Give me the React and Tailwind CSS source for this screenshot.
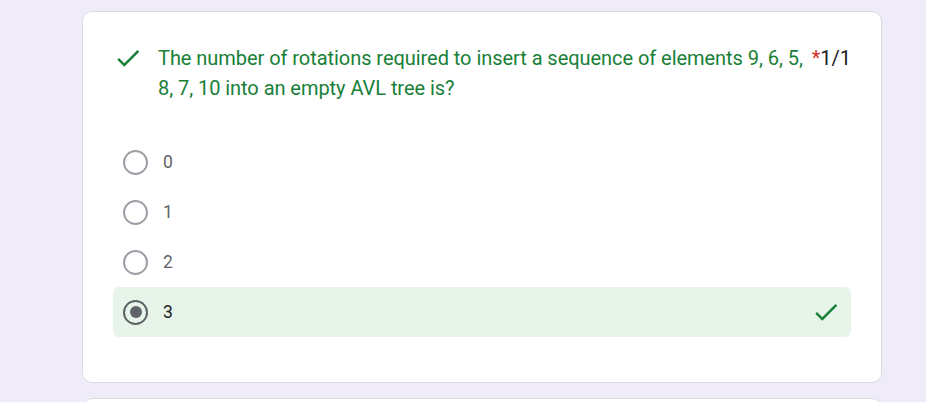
import { useState } from 'react';

const options = ['0', '1', '2', '3'];

function CheckIcon({ className }) {
    return (
        <svg viewBox="0 0 24 24" className={className} fill="currentColor">
            <path d="M9 16.17L4.83 12l-1.42 1.41L9 19 21 7l-1.41-1.41z" />
        </svg>
    );
}

function Radio({ checked }) {
    if (checked) {
        return (
            <div className="w-[25px] h-[25px] rounded-full border-[2.5px] border-[#5f6368] flex items-center justify-center shrink-0">
                <div className="w-[12px] h-[12px] rounded-full bg-[#5f6368]"></div>
            </div>
        );
    }
    return <div className="w-[25px] h-[25px] rounded-full border-[2.5px] border-[#9aa0a6] shrink-0"></div>;
}

export default function App() {
    const [selected] = useState('3');
    const correct = '3';

    return (
        <div
            className="min-h-screen bg-[#f0ebf8] pt-[11px] pl-[82px] pr-[44px]"
            style={{ fontFamily: 'Roboto, "Liberation Sans", sans-serif' }}
        >
            <div className="w-[800px] bg-white border border-[#dadce0] rounded-[10px] pt-[31px] pb-[45px] px-[30px]">
                <div className="flex items-start">
                    <CheckIcon className="w-[30px] h-[30px] text-[#188038] shrink-0" />
                    <div className="flex-1 min-w-0 ml-[15px] text-[20px] leading-[30px] tracking-[-0.05px] text-[#188038]">
                        The number of rotations required to insert a sequence of elements 9, 6, 5, 8, 7, 10 into an empty AVL tree is?
                    </div>
                    <span className="text-[20px] leading-[30px] text-[#d93025] ml-[8px]">*</span>
                    <span className="text-[20px] leading-[30px] text-[#202124]">1/1</span>
                </div>

                <div className="mt-[34px] flex flex-col">
                    {options.map((opt) => {
                        const isSel = opt === selected;
                        const isRight = isSel && opt === correct;
                        return (
                            <div
                                key={opt}
                                className={
                                    isRight
                                        ? 'h-[50px] flex items-center pl-[10px] pr-[10px] rounded-[6px] bg-[#e6f4ea]'
                                        : 'h-[50px] flex items-center pl-[10px] pr-[10px]'
                                }
                            >
                                <Radio checked={isSel} />
                                <span
                                    className={
                                        isSel
                                            ? 'ml-[15px] text-[17.5px] text-[#202124] flex-1'
                                            : 'ml-[15px] text-[17.5px] text-[#5f6368] flex-1'
                                    }
                                >
                                    {opt}
                                </span>
                                {isRight && <CheckIcon className="w-[30px] h-[30px] text-[#188038]" />}
                            </div>
                        );
                    })}
                </div>
            </div>

            <div className="w-[800px] h-[60px] mt-[15px] bg-white border border-[#dadce0] rounded-[10px]"></div>
        </div>
    );
}
